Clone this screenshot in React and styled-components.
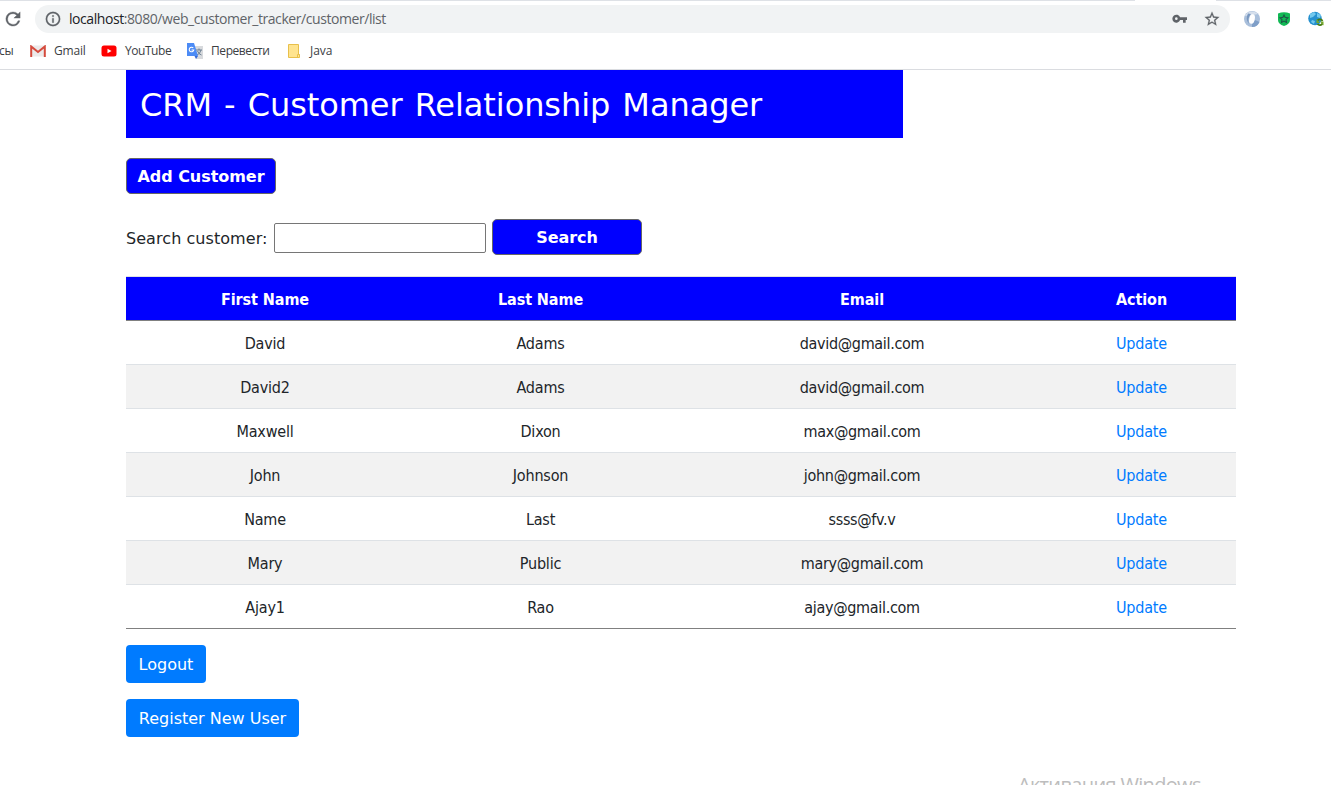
import React from "react";
import styled, { createGlobalStyle } from "styled-components";

const Global = createGlobalStyle`
  * { box-sizing: border-box; }
  html, body { margin: 0; padding: 0; background: #fff; }
  body { height: 785px; overflow: hidden; }
`;

const verdana = `"DejaVu Sans", sans-serif`;
const tahoma = `"DejaVu Sans Condensed", "DejaVu Sans", sans-serif`;
const segoe = `"Open Sans", "Noto Sans", sans-serif`;

const Page = styled.div`
  position: relative;
  width: 1331px;
  height: 785px;
  overflow: hidden;
  background: #fff;
  color: #212529;
  font: 16px/24px ${verdana};
`;

const Chrome = styled.header`
  height: 70px;
  border-bottom: 1px solid #dadce0;
  font-family: ${segoe};
`;

const TabEdge = styled.div`
  height: 1px;
  background: linear-gradient(to right, #dee1e6 1135px, #fff 1135px, #fff 1216px, #dee1e6 1216px);
`;

const Toolbar = styled.div`
  display: flex;
  align-items: center;
  height: 36px;
  padding: 0 6px 0 5px;
`;

const Omnibox = styled.div`
  display: flex;
  align-items: center;
  flex: none;
  width: 1195px;
  height: 28px;
  margin: 0 14px 0 14px;
  padding: 0 10px;
  border-radius: 14px;
  background: #f1f3f4;
`;

const Url = styled.span`
  flex: 1;
  margin-left: 8px;
  font-size: 14px;
  line-height: 20px;
  letter-spacing: -0.43px;
  color: #5f6368;
  b { font-weight: 400; color: #202124; }
`;

const OmniActions = styled.div`
  display: flex;
  gap: 16px;
`;

const Extensions = styled.div`
  display: flex;
  gap: 16px;
  flex: none;
`;

const Bookmarks = styled.nav`
  display: flex;
  align-items: center;
  height: 28px;
  font-size: 12px;
  color: #3c4043;
`;

const Bookmark = styled.span`
  display: flex;
  align-items: center;
  gap: ${(p) => p.$gap || 8}px;
  width: ${(p) => p.$w}px;
  margin-left: ${(p) => p.$shift || 0}px;
  white-space: nowrap;
  letter-spacing: ${(p) => p.$ls || -0.2}px;
  svg { flex: none; }
`;

const Main = styled.main`
  width: 1110px;
  margin-left: 126px;
`;

const Banner = styled.h2`
  width: 777px;
  height: 68px;
  margin: 0 0 20px;
  padding: 16px 14px 14px;
  background: #0000ff;
  color: #fff;
  font-size: 32px;
  font-weight: 400;
  line-height: 38px;
  letter-spacing: -0.07px;
  word-spacing: 2px;
  white-space: nowrap;
`;

const ActionButton = styled.button`
  display: block;
  width: 150px;
  height: 36px;
  padding: 1px 5px 0;
  border: 1px solid #666;
  border-radius: 5px;
  background: #0000ff;
  color: #fff;
  font: bold 16px/24px ${verdana};
  letter-spacing: -0.05px;
  white-space: nowrap;
`;

const SearchRow = styled.form`
  display: flex;
  align-items: center;
  height: 36px;
  margin: 25px 0 21px;
`;

const SearchLabel = styled.label`
  width: 148px;
  padding-top: 3px;
  letter-spacing: 0.06px;
  white-space: nowrap;
`;

const SearchInput = styled.input`
  width: 212px;
  height: 30px;
  margin: 1px 6px 0 0;
  border: 1px solid #767676;
  border-radius: 2px;
  background: #fff;
`;

const Table = styled.table`
  width: 1110px;
  table-layout: fixed;
  border-spacing: 0;
  border-top: 1px solid #dee2e6;
  border-bottom: 1px solid #808080;
  font-family: ${tahoma};
  text-align: center;
`;

const HeadCell = styled.th`
  width: ${(p) => p.$w}px;
  height: 44px;
  padding: 2px 0 0;
  border-bottom: 1px solid #808080;
  background: #0000ff;
  color: #fff;
  letter-spacing: -0.08px;
`;

const Row = styled.tr`
  background: ${(p) => (p.$striped ? "#f2f2f2" : "#fff")};
  &:last-child td { height: 43px; border-bottom: 0; }
`;

const Cell = styled.td`
  height: 44px;
  padding: 2px 0 0;
  border-bottom: 1px solid #dee2e6;
  letter-spacing: ${(p) => (p.$email ? -0.32 : -0.2)}px;
`;

const UpdateLink = styled.a`
  color: #007bff;
  text-decoration: none;
`;

const Footer = styled.div`
  display: flex;
  flex-direction: column;
  gap: 16px;
  margin-top: 16px;
`;

const PrimaryButton = styled.button`
  width: ${(p) => p.$w}px;
  height: 38px;
  padding: 2px 0 0;
  border: 0;
  border-radius: 4px;
  background: #007bff;
  color: #fff;
  font: 16px/24px ${verdana};
  white-space: nowrap;
`;

const Watermark = styled.div`
  position: absolute;
  left: 1018px;
  top: 771px;
  font: 20px/28px ${segoe};
  letter-spacing: -0.68px;
  color: #bdbdbd;
  white-space: nowrap;
`;

const ReloadIcon = () => (
  <svg width="16" height="16" viewBox="3 3 18 18" fill="#5f6368">
    <path d="M17.65 6.35A7.96 7.96 0 0 0 12 4a8 8 0 1 0 7.73 10h-2.08A6 6 0 1 1 12 6c1.66 0 3.14.69 4.22 1.78L13 11h7V4z" stroke="#5f6368" strokeWidth="0.4" />
  </svg>
);

const InfoIcon = () => (
  <svg width="16" height="16" viewBox="1 1 22 22" fill="#5f6368">
    <path d="M11 17h2v-6h-2v6zm1-15a10 10 0 1 0 0 20 10 10 0 0 0 0-20zm0 18a8 8 0 1 1 0-16 8 8 0 0 1 0 16zM11 9h2V7h-2v2z" stroke="#5f6368" strokeWidth="0.3" />
  </svg>
);

const KeyIcon = () => (
  <svg width="16" height="16" viewBox="0.500 0.500 24 24" fill="#5f6368">
    <path d="M12.65 10A6 6 0 1 0 12.65 14H17v4h4v-4h2v-4H12.65zM7 14a2 2 0 1 1 0-4 2 2 0 0 1 0 4z" />
  </svg>
);

const StarIcon = () => (
  <svg width="16" height="16" viewBox="1 1 22 22" fill="#5f6368">
    <path d="M22 9.24l-7.19-.62L12 2 9.19 8.63 2 9.24l5.46 4.73L5.82 21 12 17.27 18.18 21l-1.63-7.03L22 9.24zM12 15.4l-3.76 2.27 1-4.28-3.32-2.88 4.38-.38L12 6.1l1.71 4.04 4.38.38-3.32 2.88 1 4.28L12 15.4z" stroke="#5f6368" strokeWidth="0.3" />
  </svg>
);

const RingIcon = () => (
  <svg width="16" height="16" viewBox="0 0 16 16">
    <circle cx="8" cy="8" r="8" fill="#a9bfdb" />
    <path d="M1 5a8 8 0 0 1 13-2L9 4z" fill="#d5dfec" />
    <path d="M8 16a8 8 0 0 0 7.500-5L11 9l-3 4z" fill="#7f9fc8" />
    <path d="M4 2.500Q1 8 5 13 3 7 7 3z" fill="#7897bf" />
    <ellipse cx="8" cy="8" rx="2.800" ry="4.800" fill="#fff" transform="rotate(12 8 8)" />
  </svg>
);

const ShieldIcon = () => (
  <svg width="16" height="16" viewBox="0 0 16 16">
    <path d="M2 2.500Q8 .2 14 2.500V9q0 4-6 6-6-2-6-6z" fill="#12b955" />
    <path d="M8 3.900l1.200 2.500 2.800.4-2 1.900.5 2.700L8 10.100l-2.500 1.300.5-2.700-2-1.900 2.800-.4z" fill="none" stroke="#1f5548" strokeWidth="1.100" />
  </svg>
);

const GlobeIcon = () => (
  <svg width="16" height="16" viewBox="0 0 16 16">
    <circle cx="7" cy="7.500" r="6.800" fill="#2490cf" />
    <path d="M2 3l4-2 2 2-3 3-3 1zM9 2l4 2-1 3-3-1zM4 9l3 1-1 3-3-2z" fill="#72c8ed" />
    <path d="M9.500 9.500a3 3 0 0 1 5 .5M14.500 12.500a3 3 0 0 1-5 .5" fill="none" stroke="#477d12" strokeWidth="1.800" />
    <path d="M8.500 8v4h3.500zM15.500 14.500v-4H12z" fill="#76a829" />
  </svg>
);

const GmailIcon = () => (
  <svg width="16" height="12" viewBox="0 0 16 12">
    <rect x="1" y="0.500" width="14" height="11" fill="#eceaea" />
    <path d="M1.200 12V1.500L8 7l6.800-5.500V12" fill="none" stroke="#d54b3d" strokeWidth="2" />
  </svg>
);

const YouTubeIcon = () => (
  <svg width="16" height="12" viewBox="0 0 16 12">
    <rect x="0.500" y="0.500" width="15" height="11" rx="2.500" fill="#f00" />
    <path d="M6.500 3.700v4.600L10.500 6z" fill="#fff" />
  </svg>
);

const TranslateIcon = () => (
  <svg width="16" height="16" viewBox="0 0 16 16">
    <path d="M6 3h10v13H9z" fill="#d8dadd" />
    <path d="M9 7h6M12 5.500V7M14 7q-1 4-4 5M10.500 8q1 3 4 4" fill="none" stroke="#6b7f92" strokeWidth="1" />
    <path d="M0 0h7l4 13H0z" fill="#4c8bf5" />
    <path d="M7.500 13H11l-2 3z" fill="#3367d6" />
    <path d="M6.300 5A2.300 2.300 0 1 0 6.800 7H4.500" fill="none" stroke="#fff" strokeWidth="1.100" />
  </svg>
);

const FolderIcon = () => (
  <svg width="12" height="14" viewBox="0 0 12 14">
    <path d="M.5.500h10v10h1v3H.5z" fill="#ffe48f" stroke="#e8c04b" />
    <path d="M9.500 13.500v-3h2" fill="none" stroke="#e8c04b" />
  </svg>
);

const customers = [
  ["David", "Adams", "david@gmail.com"],
  ["David2", "Adams", "david@gmail.com"],
  ["Maxwell", "Dixon", "max@gmail.com"],
  ["John", "Johnson", "john@gmail.com"],
  ["Name", "Last", "ssss@fv.v"],
  ["Mary", "Public", "mary@gmail.com"],
  ["Ajay1", "Rao", "ajay@gmail.com"],
];

export default function App() {
  return (
    <Page>
      <Global />
      <Chrome>
        <TabEdge />
        <Toolbar>
          <ReloadIcon />
          <Omnibox>
            <InfoIcon />
            <Url><b>localhost</b>:8080/web_customer_tracker/customer/list</Url>
            <OmniActions><KeyIcon /><StarIcon /></OmniActions>
          </Omnibox>
          <Extensions><RingIcon /><ShieldIcon /><GlobeIcon /></Extensions>
        </Toolbar>
        <Bookmarks>
          <Bookmark $w={31} $shift={-1}>сы</Bookmark>
          <Bookmark $w={71}><GmailIcon />Gmail</Bookmark>
          <Bookmark $w={86} $ls={-0.45}><YouTubeIcon />YouTube</Bookmark>
          <Bookmark $w={101} $ls={-0.42}><TranslateIcon />Перевести</Bookmark>
          <Bookmark $w={60} $gap={10} $ls={-0.05}><FolderIcon />Java</Bookmark>
        </Bookmarks>
      </Chrome>
      <Main>
        <Banner>CRM - Customer Relationship Manager</Banner>
        <ActionButton type="button">Add Customer</ActionButton>
        <SearchRow>
          <SearchLabel htmlFor="search">Search customer:</SearchLabel>
          <SearchInput id="search" />
          <ActionButton type="button">Search</ActionButton>
        </SearchRow>
        <Table>
          <thead>
            <tr>
              <HeadCell $w={278}>First Name</HeadCell>
              <HeadCell $w={273}>Last Name</HeadCell>
              <HeadCell $w={370}>Email</HeadCell>
              <HeadCell $w={189}>Action</HeadCell>
            </tr>
          </thead>
          <tbody>
            {customers.map(([first, last, email], i) => (
              <Row key={i} $striped={i % 2 === 1}>
                <Cell>{first}</Cell>
                <Cell>{last}</Cell>
                <Cell $email>{email}</Cell>
                <Cell><UpdateLink href="#">Update</UpdateLink></Cell>
              </Row>
            ))}
          </tbody>
        </Table>
        <Footer>
          <PrimaryButton $w={80}>Logout</PrimaryButton>
          <PrimaryButton $w={173}>Register New User</PrimaryButton>
        </Footer>
      </Main>
      <Watermark>Активация Windows</Watermark>
    </Page>
  );
}
